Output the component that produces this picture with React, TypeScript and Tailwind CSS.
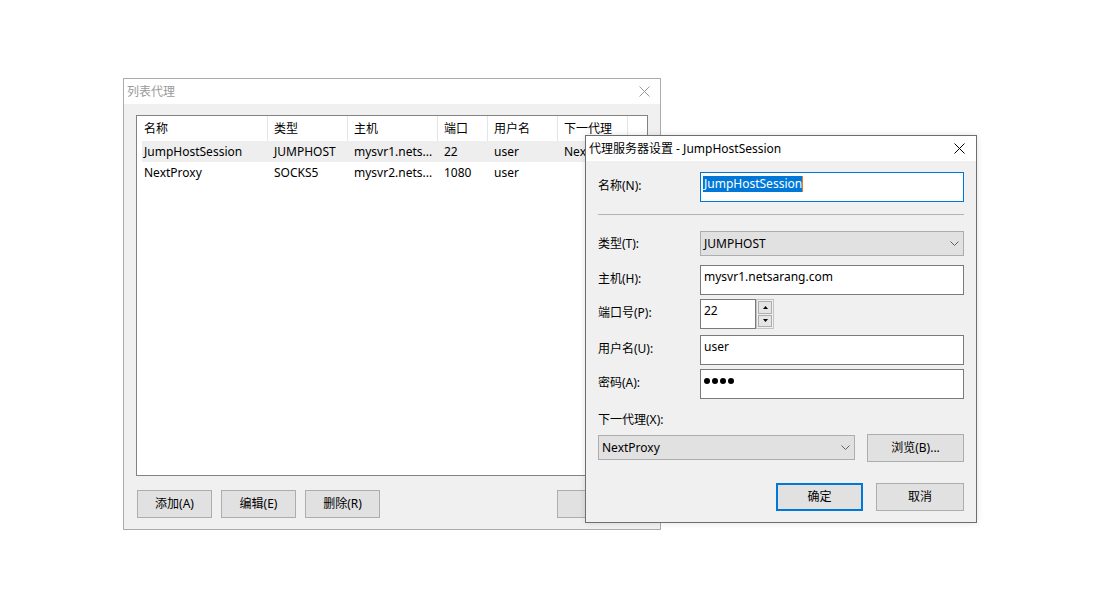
import React from "react";

function CloseX({ color }: { color: string }) {
  return (
    <svg width="11" height="11" viewBox="0 0 11 11">
      <path d="M0.5 0.5L10.5 10.5M10.5 0.5L0.5 10.5" stroke={color} strokeWidth="1" fill="none" />
    </svg>
  );
}

function Chevron() {
  return (
    <svg width="9" height="5" viewBox="0 0 9 5">
      <path d="M0.5 0.5L4.5 4.5L8.5 0.5" stroke="#606060" strokeWidth="1" fill="none" />
    </svg>
  );
}

function TriUp() {
  return (
    <svg width="5" height="3" viewBox="0 0 5 3">
      <path d="M0 3L2.5 0L5 3Z" fill="#000" />
    </svg>
  );
}

function TriDown() {
  return (
    <svg width="5" height="3" viewBox="0 0 5 3">
      <path d="M0 0L2.5 3L5 0Z" fill="#000" />
    </svg>
  );
}

const cols = [
  { w: "w-[131px]", pl: "pl-[7px]", label: "名称" },
  { w: "w-[80px]", pl: "pl-[6px]", label: "类型" },
  { w: "w-[90px]", pl: "pl-[6px]", label: "主机" },
  { w: "w-[50px]", pl: "pl-[6px]", label: "端口" },
  { w: "w-[70px]", pl: "pl-[6px]", label: "用户名" },
  { w: "w-[70px]", pl: "pl-[6px]", label: "下一代理" },
];

const rows = [
  ["JumpHostSession", "JUMPHOST", "mysvr1.nets...", "22", "user", "NextProxy"],
  ["NextProxy", "SOCKS5", "mysvr2.nets...", "1080", "user", ""],
];

function Btn({ children, w, className = "" }: { children?: React.ReactNode; w: string; className?: string }) {
  return (
    <div
      className={`${w} h-[28px] border border-[#adadad] bg-[#e1e1e1] flex items-center justify-center text-black ${className}`}
    >
      {children}
    </div>
  );
}

export default function App() {
  return (
    <div className="relative w-[1100px] h-[600px] bg-white overflow-hidden font-['Noto_Sans','Noto_Sans_CJK_SC',sans-serif] text-[12px] leading-[16px] text-black">
      {/* Background window: 列表代理 */}
      <div className="absolute left-[123px] top-[78px] w-[538px] h-[452px] border border-[#ababab] bg-[#f0f0f0] flex flex-col">
        <div className="h-[25px] bg-white flex items-center justify-between pl-[3px] pr-[10px]">
          <span className="text-[#9a9a9a]">列表代理</span>
          <CloseX color="#9a9a9a" />
        </div>
        <div className="flex-1 flex flex-col px-[12px] pt-[11px]">
          <div className="w-[512px] h-[361px] border border-[#828282] bg-white flex flex-col">
            <div className="h-[25px] flex">
              {cols.map((c, i) => (
                <div key={i} className={`${c.w} ${c.pl} h-full border-r border-[#e5e5e5] flex items-center`}>
                  {c.label}
                </div>
              ))}
            </div>
            {rows.map((r, ri) => (
              <div key={ri} className={`h-[21px] flex ml-[5px] ${ri === 0 ? "bg-[#eeeeee]" : ""}`}>
                {cols.map((c, i) => (
                  <div
                    key={i}
                    className={`${i === 0 ? "w-[126px] pl-[2px]" : `${c.w} ${c.pl}`} h-full flex items-center whitespace-nowrap overflow-hidden`}
                  >
                    {r[i]}
                  </div>
                ))}
              </div>
            ))}
          </div>
          <div className="mt-[14px] ml-[1px] flex">
            <Btn w="w-[75px]">添加(A)</Btn>
            <Btn w="w-[75px]" className="ml-[9px]">编辑(E)</Btn>
            <Btn w="w-[75px]" className="ml-[9px]">删除(R)</Btn>
            <Btn w="w-[75px]" className="ml-[177px]" />
          </div>
        </div>
      </div>

      {/* Foreground dialog */}
      <div className="absolute left-[585px] top-[135px] w-[392px] h-[388px] border border-[#6e6e6e] bg-[#f0f0f0] flex flex-col shadow-[0_0_6px_rgba(0,0,0,0.12)]">
        <div className="h-[25px] bg-white flex items-center justify-between pl-[3px] pr-[11px]">
          <span>代理服务器设置 - JumpHostSession</span>
          <CloseX color="#000" />
        </div>
        <div className="flex-1 flex flex-col px-[12px] pt-[11px]">
          {/* Name */}
          <div className="flex items-center">
            <div className="w-[102px] pb-[2px]">名称(N):</div>
            <div className="w-[264px] h-[30px] border border-[#0078d7] bg-white pl-[2px] pt-[3px] flex items-start">
              <span className="bg-[#0078d7] text-white pl-[1px] h-[16px]">JumpHostSession</span>
              <span className="w-[1px] h-[16px] bg-[#d8822c]" />
            </div>
          </div>
          <div className="mt-[12px] h-[1px] bg-[#b4b4b4]" />
          {/* Type */}
          <div className="mt-[16px] flex items-center">
            <div className="w-[102px]">类型(T):</div>
            <div className="w-[264px] h-[25px] border border-[#adadad] bg-[#e1e1e1] pl-[3px] pr-[4px] flex items-center justify-between">
              <span>JUMPHOST</span>
              <Chevron />
            </div>
          </div>
          {/* Host */}
          <div className="mt-[9px] flex items-center">
            <div className="w-[102px] pb-[2px]">主机(H):</div>
            <div className="w-[264px] h-[30px] border border-[#7a7a7a] bg-white pl-[3px] pt-[3px]">mysvr1.netsarang.com</div>
          </div>
          {/* Port */}
          <div className="mt-[4px] flex items-center">
            <div className="w-[102px] pb-[2px]">端口号(P):</div>
            <div className="w-[56px] h-[30px] border border-[#7a7a7a] bg-white pl-[3px] pt-[3px]">22</div>
            <div className="w-[18px] h-[30px] border border-[#c4c4c4] bg-[#f0f0f0] p-[1px] flex flex-col gap-[1px]">
              <div className="flex-1 border border-[#adadad] bg-[#e5e5e5] flex items-center justify-center">
                <TriUp />
              </div>
              <div className="flex-1 border border-[#adadad] bg-[#e5e5e5] flex items-center justify-center">
                <TriDown />
              </div>
            </div>
          </div>
          {/* User */}
          <div className="mt-[6px] flex items-center">
            <div className="w-[102px] pb-[2px]">用户名(U):</div>
            <div className="w-[264px] h-[30px] border border-[#7a7a7a] bg-white pl-[3px] pt-[3px]">user</div>
          </div>
          {/* Password */}
          <div className="mt-[4px] flex items-center">
            <div className="w-[102px] pb-[2px]">密码(A):</div>
            <div className="w-[264px] h-[30px] border border-[#7a7a7a] bg-white pl-[3px] pt-[3px]">
              <div className="h-[16px] flex items-center gap-[2px]">
                <span className="w-[6px] h-[6px] rounded-full bg-black" />
                <span className="w-[6px] h-[6px] rounded-full bg-black" />
                <span className="w-[6px] h-[6px] rounded-full bg-black" />
                <span className="w-[6px] h-[6px] rounded-full bg-black" />
              </div>
            </div>
          </div>
          {/* Next proxy */}
          <div className="mt-[13px] h-[16px]">下一代理(X):</div>
          <div className="mt-[6px] flex items-start">
            <div className="mt-[1px] w-[257px] h-[25px] border border-[#adadad] bg-[#e1e1e1] pl-[3px] pr-[4px] flex items-center justify-between">
              <span>NextProxy</span>
              <Chevron />
            </div>
            <Btn w="w-[97px]" className="ml-[12px]">浏览(B)...</Btn>
          </div>
          <div className="mt-[21px] flex justify-end">
            <div className="w-[87px] h-[28px] border-2 border-[#0078d7] bg-[#e1e1e1] flex items-center justify-center">确定</div>
            <Btn w="w-[88px]" className="ml-[13px]">取消</Btn>
          </div>
        </div>
      </div>
    </div>
  );
}
